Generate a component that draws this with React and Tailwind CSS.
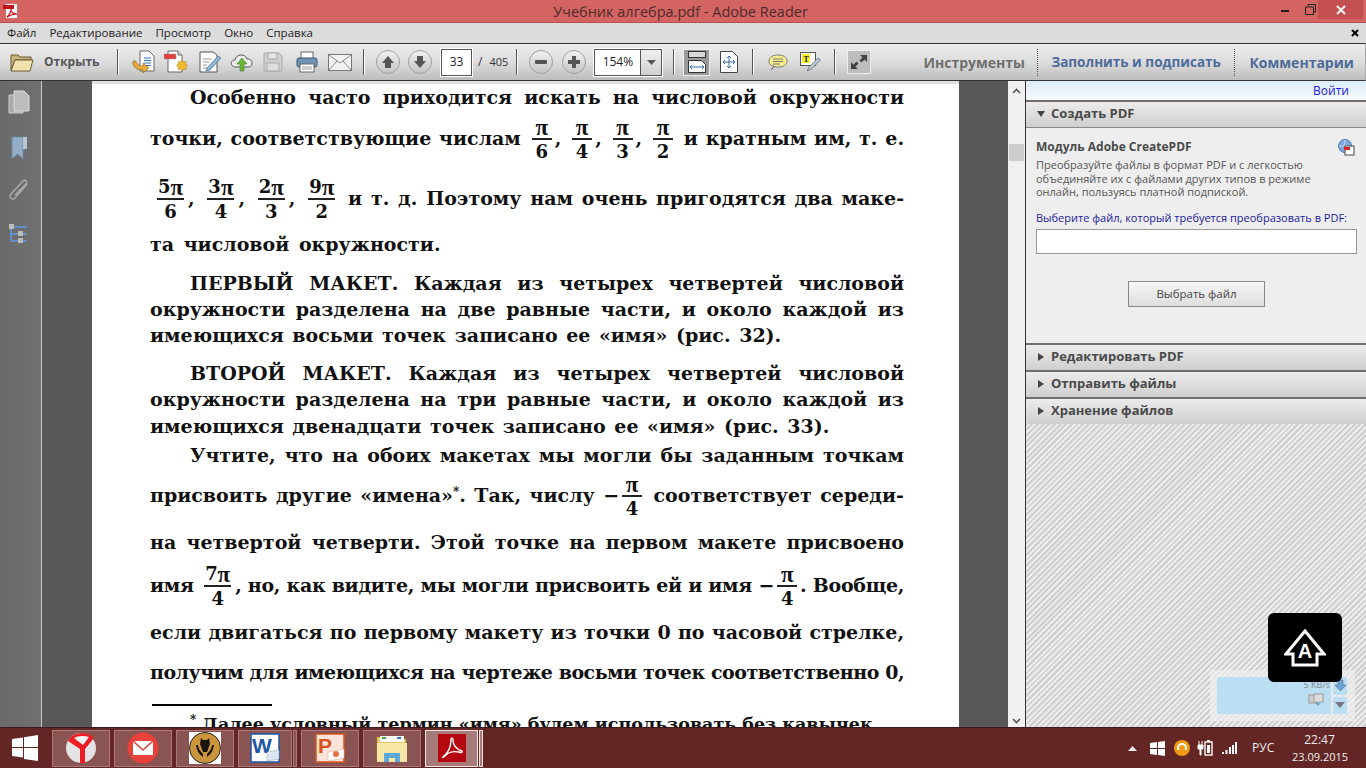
import React from "react";

const ui = { fontFamily: '"Open Sans", "Noto Sans", sans-serif' };
const serif = { fontFamily: '"DejaVu Serif", "Liberation Serif", serif' };
const piFont = { fontFamily: '"Liberation Serif", serif' };

function Pi() {
  return <span className="text-[23px] leading-none" style={piFont}>π</span>;
}

function Frac({ n, bottom, wide }) {
  return (
    <span className={`inline-flex flex-col items-center align-middle leading-none text-[18px] ${wide ? "mx-[4px]" : "mx-[3px]"}`}>
      <span className="h-[22px] flex items-center">{n}<Pi /></span>
      <span className={`h-[2px] bg-[#222] ${wide ? "w-[27px]" : "w-[20px]"}`}></span>
      <span className="h-[24px] flex items-center">{bottom}</span>
    </span>
  );
}

function Line({ className, children }) {
  return (
    <div className={`text-justify [text-align-last:justify] whitespace-nowrap flex-none ${className}`}>
      {children}
    </div>
  );
}

function Sep() {
  return <div className="w-[2px] h-[26px] flex-none bg-[#555] border-r border-white"></div>;
}

function RoundBtn({ children }) {
  return (
    <div className="w-[24px] h-[24px] rounded-full flex-none border border-[#a0a0a0] bg-gradient-to-b from-[#f2f2f2] to-[#c4c4c4] flex items-center justify-center">
      <svg width="16" height="16" viewBox="0 0 16 16">{children}</svg>
    </div>
  );
}

function PanelHeader({ label, open }) {
  return (
    <div className="h-[27px] flex-none flex items-center border-t-2 border-[#6e6e6e] bg-gradient-to-b from-[#ececec] to-[#cfcfcf] pl-[10px] pb-[2px] gap-[5px] text-[13px] font-bold text-[#4a4a4a]">
      {open ? (
        <svg width="10" height="8" viewBox="0 0 10 8"><path d="M1 1h8L5 7z" fill="#444" /></svg>
      ) : (
        <svg width="10" height="10" viewBox="0 0 10 10"><path d="M2 1l6 4-6 4z" fill="#444" /></svg>
      )}
      <span>{label}</span>
    </div>
  );
}

function TaskBtn({ active, children, className = "" }) {
  return (
    <div className={`h-[37px] flex-none flex items-center justify-center border ${active ? "bg-[#a87a79] border-[#f0e4e4]" : "bg-[#8a5452] border-[#a87a78]"} ${className}`}>
      {children}
    </div>
  );
}

export default function App() {
  return (
    <div className="w-[1366px] h-[768px] overflow-hidden flex flex-col relative bg-[#555]" style={ui}>
      {/* title bar */}
      <div className="h-[23px] flex-none bg-[#d46462] border-b border-[#b9504f] flex items-start relative">
        <svg className="ml-[2px] mt-[3px]" width="17" height="16" viewBox="0 0 17 16">
          <path d="M4 1h11v14H4z" fill="#fff" stroke="#bbb" strokeWidth=".5" />
          <rect x="1" y="2" width="11" height="4" fill="#c1121c" />
          <path d="M5 14c3-3 4-6 4-8 0 3 2 5 6 5-4 0-7 1-10 3z" fill="none" stroke="#d0121b" strokeWidth="1.2" />
        </svg>
        <div className="flex-1 text-center text-[14.500px] leading-[23px] text-[#4c2a2a] pl-[72px]">Учебник алгебра.pdf - Adobe Reader</div>
        <div className="flex items-start flex-none">
          <div className="w-[30px] h-[19px] flex items-center justify-center">
            <div className="w-[8px] h-[2px] mt-[3px] bg-[#222]"></div>
          </div>
          <div className="w-[20px] h-[19px] flex items-center justify-center">
            <svg width="11" height="11" viewBox="0 0 11 11"><path d="M3 2V.5h7.5V8H8.5M.5 3h8v7.5h-8z" fill="none" stroke="#222" /></svg>
          </div>
          <div className="w-[45px] h-[19px] ml-[-2px] mr-[3px] bg-[#c44f50] flex items-center justify-center">
            <svg width="10" height="10" viewBox="0 0 10 10"><path d="M1 1l8 8M9 1l-8 8" stroke="#fff" strokeWidth="1.8" /></svg>
          </div>
        </div>
      </div>

      {/* menu */}
      <div className="h-[20px] flex-none bg-[#dcdcdc] flex items-center pl-[7px] gap-[13px] text-[11.500px] text-[#222] relative">
        <span>Файл</span>
        <span>Редактирование</span>
        <span>Просмотр</span>
        <span>Окно</span>
        <span>Справка</span>
        <svg className="ml-auto mr-[7px]" width="8" height="8" viewBox="0 0 8 8"><path d="M1 1l6 6M7 1L1 7" stroke="#000" strokeWidth="2" /></svg>
      </div>

      {/* toolbar */}
      <div className="h-[38px] flex-none border-y border-[#333] border-r border-r-[#aaa] bg-gradient-to-b from-[#ececec] via-[#dddddd] to-[#bdbdbd] flex items-center pl-[10px]">
        <svg className="flex-none" width="24" height="20" viewBox="0 0 24 20">
          <path d="M1 18V3h7l2 2h11v3H5z" fill="#c9b27a" stroke="#6b5c33" />
          <path d="M1 19l4-11h18l-3 11z" fill="#f2e2ae" stroke="#6b5c33" />
        </svg>
        <span className="ml-[10px] w-[55px] text-[12px] font-bold text-[#555] flex-none">Открыть</span>
        <div className="ml-[18px]"><Sep /></div>
        <svg className="ml-[13px] flex-none" width="24" height="24" viewBox="0 0 24 24">
          <path d="M8 1h9l5 5v15H8z" fill="#fff" stroke="#666" />
          <path d="M12 8h7M12 10.500h7M12 13h7M12 15.500h7" stroke="#2f6fc0" />
          <path d="M1 11c-1 6 4 9 10 9v3l6-5-6-5v3c-4 0-7-2-7-5z" fill="#e9a93a" stroke="#8a5f10" strokeWidth=".6" />
        </svg>
        <svg className="ml-[8px] flex-none" width="24" height="24" viewBox="0 0 24 24">
          <path d="M4 1h10l4 4v17H4z" fill="#fff" stroke="#666" />
          <path d="M14 1v4h4" fill="#ddd" stroke="#666" />
          <rect x="0" y="4" width="12" height="5" fill="#e23c3c" stroke="#999" strokeWidth=".5" />
          <path d="M18 13l1.500 2 2.500-.5-.5 2.500 2 1.500-2 1.500.5 2.500-2.500-.5-1.500 2-1.500-2-2.500.5.5-2.500-2-1.500 2-1.500-.5-2.500 2.500.5z" fill="#f0b92e" stroke="#a87a10" strokeWidth=".5" transform="translate(0 -3)" />
        </svg>
        <svg className="ml-[11px] flex-none" width="22" height="22" viewBox="0 0 22 22">
          <path d="M1 1h13l4 3v17H1z" fill="#fff" stroke="#555" />
          <path d="M4 8h9M4 11h6M4 14h4M4 17h5" stroke="#999" />
          <path d="M8 17L19 5l3 2-11 12-4 1z" fill="#8fb6d8" stroke="#4d6f8c" strokeWidth=".7" />
        </svg>
        <svg className="ml-[9px] flex-none" width="24" height="20" viewBox="0 0 24 20">
          <path d="M6 15c-6 0-6-7-1-7 1-6 10-7 12-1 6-1 7 8 1 8z" fill="#eee" stroke="#555" />
          <path d="M12 6l5 6h-3v7h-4v-7H7z" fill="#69b53c" stroke="#3f7f1e" strokeWidth=".6" />
        </svg>
        <svg className="ml-[9px] flex-none" width="20" height="20" viewBox="0 0 20 20">
          <path d="M1 1h15l3 3v15H1z" fill="#cfcfcf" stroke="#aaa" />
          <rect x="5" y="1" width="9" height="6" fill="#e5e5e5" stroke="#aaa" />
          <rect x="4" y="11" width="12" height="8" fill="#ddd" stroke="#aaa" />
        </svg>
        <svg className="ml-[13px] flex-none" width="22" height="22" viewBox="0 0 22 22">
          <rect x="5" y="1" width="12" height="7" fill="#fff" stroke="#666" />
          <rect x="1" y="7" width="20" height="9" rx="2" fill="#6f93b5" stroke="#3f5870" />
          <rect x="4" y="13" width="14" height="8" fill="#fff" stroke="#666" />
          <path d="M6 16h10M6 18h10" stroke="#999" />
        </svg>
        <svg className="ml-[10px] flex-none" width="24" height="17" viewBox="0 0 24 17">
          <rect x=".5" y=".5" width="23" height="16" fill="#f2f2f2" stroke="#777" />
          <path d="M1 1l11 8 11-8M1 16l8-9M23 16l-8-9" fill="none" stroke="#888" />
        </svg>
        <div className="ml-[11px]"><Sep /></div>
        <div className="ml-[11px]">
          <RoundBtn><path d="M8 2l6 7h-3v5H5V9H2z" fill="#555" /></RoundBtn>
        </div>
        <div className="ml-[8px]">
          <RoundBtn><path d="M8 14l6-7h-3V2H5v5H2z" fill="#555" /></RoundBtn>
        </div>
        <div className="ml-[9px] w-[31px] h-[27px] flex-none bg-white border border-[#555] outline outline-1 outline-white flex items-center justify-center text-[12px] text-[#222]">33</div>
        <span className="ml-[6px] text-[12px] text-[#333] flex-none">/</span>
        <span className="ml-[7px] w-[21px] text-[11px] text-[#333] flex-none">405</span>
        <div className="ml-[6px]"><Sep /></div>
        <div className="ml-[11px]">
          <RoundBtn><rect x="2" y="6" width="12" height="4" rx="1" fill="#555" /></RoundBtn>
        </div>
        <div className="ml-[9px]">
          <RoundBtn><path d="M6 2h4v4h4v4h-4v4H6v-4H2V6h4z" fill="#555" /></RoundBtn>
        </div>
        <div className="ml-[8px] w-[68px] h-[27px] flex-none bg-white border border-[#555] outline outline-1 outline-white flex items-center text-[12px] text-[#222]">
          <span className="w-[45px] text-center">154%</span>
          <div className="flex-1 h-full bg-gradient-to-b from-[#f0f0f0] to-[#d0d0d0] border-l border-[#555] flex items-center justify-center">
            <svg width="9" height="5" viewBox="0 0 9 5"><path d="M0 0h9L4.500 5z" fill="#555" /></svg>
          </div>
        </div>
        <div className="ml-[11px]"><Sep /></div>
        <div className="ml-[8px] w-[27px] h-[27px] flex-none bg-[#9a9a9a] border border-[#eee] flex items-center justify-center">
          <svg width="18" height="22" viewBox="0 0 18 22">
            <rect x=".5" y=".5" width="17" height="6" fill="#d8d8d8" stroke="#333" />
            <path d="M.5 9.500h13l4 4v8H.5z" fill="#fff" stroke="#333" />
            <path d="M2 16h14M2 16l2-2M2 16l2 2M16 16l-2-2M16 16l-2 2" stroke="#3a6ea8" fill="none" />
          </svg>
        </div>
        <svg className="ml-[10px] flex-none" width="18" height="22" viewBox="0 0 18 22">
          <path d="M.5.500h12l5 5v16H.5z" fill="#fff" stroke="#444" />
          <path d="M9 5v12M3 11h12M9 5l-2 2M9 5l2 2M9 17l-2-2M9 17l2-2M3 11l2-2M3 11l2 2M15 11l-2-2M15 11l-2 2" stroke="#3a6ea8" fill="none" />
        </svg>
        <div className="ml-[14px]"><Sep /></div>
        <svg className="ml-[14px] flex-none" width="20" height="18" viewBox="0 0 20 18">
          <path d="M6 13C2 13 1 10 1 8c0-4 4-6 9-6s9 2 9 6-4 6-9 6c-1 0-2 0-3-.5L3 17z" fill="#f7ee8a" stroke="#777" />
          <path d="M5 6h10M5 8.500h10M5 11h7" stroke="#777" />
        </svg>
        <svg className="ml-[12px] flex-none" width="21" height="20" viewBox="0 0 21 20">
          <rect x=".5" y=".5" width="15" height="13" fill="#fff" stroke="#555" />
          <rect x="2" y="2" width="8" height="9" fill="#f5ef2a" />
          <text x="3.500" y="9.500" fontSize="8" fontWeight="700" fontFamily="Liberation Serif, serif" fill="#222">T</text>
          <path d="M7 19l2-4 9-9 2.500 2-9 9z" fill="#b8c4d0" stroke="#556" strokeWidth=".6" />
        </svg>
        <div className="ml-[13px]"><Sep /></div>
        <div className="ml-[11px] w-[24px] h-[24px] flex-none bg-[#bdbdbd] border border-[#eee] flex items-center justify-center">
          <svg width="20" height="20" viewBox="0 0 20 20">
            <path d="M11 3h7v7l-2.500-2.500-3 3-2-2 3-3zM9 17H2v-7l2.500 2.500 3-3 2 2-3 3z" fill="#444" />
          </svg>
        </div>
        <span className="ml-[52px] text-[14px] font-bold text-[#6e6e6e] flex-none w-[100px] whitespace-nowrap">Инструменты</span>
        <div className="ml-[14px] h-[27px] flex-none border-l border-dotted border-[#555]"></div>
        <span className="ml-[13px] text-[13.500px] font-bold text-[#4d6b99] flex-none w-[170px] whitespace-nowrap">Заполнить и подписать</span>
        <div className="ml-[13px] h-[27px] flex-none border-l border-dotted border-[#555]"></div>
        <span className="ml-[14px] text-[14px] font-bold text-[#4d6b99] flex-none">Комментарии</span>
      </div>

      {/* main */}
      <div className="flex-1 min-h-0 flex">
        <div className="w-[41px] flex-none bg-gradient-to-r from-[#6a6a6a] to-[#707070] flex flex-col items-center pr-[3px] pt-[9px]">
          <svg width="22" height="24" viewBox="0 0 22 24">
            <path d="M1 5h14v18H1z" fill="#aaa" stroke="#d0d0d0" />
            <path d="M6 1h10l5 5v15H6z" fill="#bdbdbd" stroke="#ddd" />
          </svg>
          <svg className="mt-[22px]" width="18" height="24" viewBox="0 0 18 24">
            <path d="M2 1h11v22l-5.500-5L2 23z" fill="#93aec6" stroke="#6f8aa3" />
            <path d="M13 1h4v12h-4z" fill="#b8c8d6" />
          </svg>
          <svg className="mt-[18px]" width="22" height="24" viewBox="0 0 22 24">
            <path d="M19 6L7 20c-3 3-7-1-4-4L15 3c2-2 5 1 3 3L7 17" fill="none" stroke="#aaa" strokeWidth="1.500" />
          </svg>
          <svg className="mt-[21px]" width="20" height="20" viewBox="0 0 20 20">
            <path d="M2 4v14h16M2 4h16M2 11h16" fill="none" stroke="#5f8fc4" strokeWidth="2" />
            <rect x="0" y="1" width="5" height="5" fill="#bbb" />
            <rect x="9" y="8" width="5" height="5" fill="#bbb" />
            <rect x="9" y="15" width="5" height="5" fill="#bbb" />
          </svg>
        </div>
        <div className="w-[51px] flex-none bg-[#585858] border-l border-[#c8c8c8]"></div>

        {/* page */}
        <div className="w-[867px] flex-none bg-white overflow-hidden pl-[58px] pr-[55px] text-[19px] font-bold leading-[26px] text-[#111] flex flex-col border-t-[3px] border-[#e0e0e0]" style={serif}>
          <Line className="h-[26px] pl-[40px]">Особенно часто приходится искать на числовой окружности</Line>
          <Line className="h-[46px] mt-[5px] leading-[46px]">
            точки, соответствующие числам <Frac n="" bottom="6" />, <Frac n="" bottom="4" />, <Frac n="" bottom="3" />, <Frac n="" bottom="2" /> и кратным им, т. е.
          </Line>
          <Line className="h-[54px] mt-[10px] leading-[54px] pl-[3px]">
            <Frac n="5" bottom="6" wide />, <Frac n="3" bottom="4" wide />, <Frac n="2" bottom="3" wide />, <Frac n="9" bottom="2" wide /> и т. д. Поэтому нам очень пригодятся два маке-
          </Line>
          <div className="h-[26px] mt-[6px] flex-none [word-spacing:3px]">та числовой окружности.</div>
          <Line className="h-[26px] mt-[13px] pl-[40px]">ПЕРВЫЙ МАКЕТ. Каждая из четырех четвертей числовой</Line>
          <Line className="h-[26px]">окружности разделена на две равные части, и около каждой из</Line>
          <div className="h-[26px] flex-none [word-spacing:2px]">имеющихся восьми точек записано ее «имя» (рис. 32).</div>
          <Line className="h-[26px] mt-[12px] pl-[40px]">ВТОРОЙ МАКЕТ. Каждая из четырех четвертей числовой</Line>
          <Line className="h-[26px]">окружности разделена на три равные части, и около каждой из</Line>
          <div className="h-[26px] mt-[1px] flex-none [word-spacing:2px]">имеющихся двенадцати точек записано ее «имя» (рис. 33).</div>
          <Line className="h-[26px] mt-[3px] pl-[40px]">Учтите, что на обоих макетах мы могли бы заданным точкам</Line>
          <Line className="h-[50px] mt-[2px] leading-[50px]">
            присвоить другие «имена»<sup className="text-[12px]">*</sup>. Так, числу −<Frac n="" bottom="4" /> соответствует середи-
          </Line>
          <Line className="h-[26px] mt-[9px]">на четвертой четверти. Этой точке на первом макете присвоено</Line>
          <Line className="h-[50px] mt-[5px] leading-[50px] tracking-[-0.3px]">
            имя <Frac n="7" bottom="4" wide />, но, как видите, мы могли присвоить ей и имя −<Frac n="" bottom="4" />. Вообще,
          </Line>
          <Line className="h-[26px] mt-[9px]">если двигаться по первому макету из точки 0 по часовой стрелке,</Line>
          <Line className="h-[26px] mt-[14px] tracking-[-0.5px]">получим для имеющихся на чертеже восьми точек соответственно 0,</Line>
          <div className="w-[120px] h-[2px] mt-[19px] ml-[2px] flex-none bg-black"></div>
          <div className="mt-[5px] pl-[40px] text-[17.500px] flex-none whitespace-nowrap"><sup className="text-[12px]">*</sup> Далее условный термин «имя» будем использовать без кавычек.</div>
        </div>

        <div className="w-[49px] flex-none bg-[#585858]"></div>

        {/* scrollbar */}
        <div className="w-[17px] flex-none bg-[#f0f0f0] flex flex-col items-center pt-[7px]">
          <svg width="9" height="6" viewBox="0 0 9 6"><path d="M1 5l3.500-3.500L8 5" fill="none" stroke="#555" strokeWidth="1.600" /></svg>
          <div className="w-[15px] h-[17px] mt-[50px] bg-[#cdcdcd]"></div>
          <svg className="mt-auto mb-[3px]" width="9" height="6" viewBox="0 0 9 6"><path d="M1 1l3.500 3.500L8 1" fill="none" stroke="#555" strokeWidth="1.600" /></svg>
        </div>

        {/* right panel */}
        <div className="flex-1 min-w-0 flex flex-col border-l border-[#333] bg-[repeating-linear-gradient(135deg,#ececec_0px,#ececec_2px,#cfcfcf_2px,#cfcfcf_4px)]">
          <div className="h-[19px] flex-none bg-gradient-to-b from-[#dcecfb] to-[#f6fafe] text-right pr-[17px] text-[12px] leading-[19px] text-[#1a1ae0]">Войти</div>
          <PanelHeader label="Создать PDF" open />
          <div className="h-[216px] flex-none bg-[#eeeeee] pl-[10px] pr-[9px] border-t border-[#888] relative">
            <div className="pt-[10px] text-[12px] font-bold leading-[17px] text-[#4a4a4a]">Модуль Adobe CreatePDF</div>
            <div className="pt-[3px] text-[11px] leading-[13.500px] text-[#555] whitespace-nowrap">
              <div>Преобразуйте файлы в формат PDF и с легкостью</div>
              <div>объединяйте их с файлами других типов в режиме</div>
              <div>онлайн, пользуясь платной подпиской.</div>
            </div>
            <div className="pt-[11px] text-[11px] leading-[15px] text-[#1a1a9e] whitespace-nowrap">Выберите файл, который требуется преобразовать в PDF:</div>
            <div className="mt-[4px] h-[25px] bg-white border border-[#999]"></div>
            <div className="mt-[27px] mx-auto w-[137px] h-[26px] border border-[#888] bg-gradient-to-b from-[#f6f6f6] to-[#dedede] flex items-center justify-center text-[11.500px] text-[#444]">Выбрать файл</div>
            <svg className="absolute right-[11px] top-[11px]" width="17" height="17" viewBox="0 0 17 17">
              <circle cx="7" cy="7" r="6.500" fill="#7aa8dc" stroke="#4a78b0" />
              <path d="M1 7h12M7 1v12" stroke="#cfe0f2" />
              <rect x="7" y="7" width="9" height="9" fill="#fff" stroke="#444" />
              <rect x="6" y="8" width="6" height="3" fill="#d22" />
            </svg>
          </div>
          <PanelHeader label="Редактировать PDF" />
          <PanelHeader label="Отправить файлы" />
          <PanelHeader label="Хранение файлов" />
        </div>
      </div>

      {/* taskbar */}
      <div className="h-[41px] flex-none bg-[#632625] border-t border-[#3f1a1a] flex items-center pl-[12px]">
        <svg className="flex-none" width="26" height="26" viewBox="0 0 26 26">
          <path d="M0 4l11-1.500V12H0zM12 2.300L26 0v12H12zM0 13h11v9.500L0 21zM12 13h14v13l-14-2z" fill="#fff" />
        </svg>
        <div className="ml-[14px]">
          <TaskBtn className="w-[58px]">
            <svg width="32" height="32" viewBox="0 0 32 32">
              <circle cx="16" cy="16" r="15" fill="#e4e4e4" />
              <path d="M3 9c4-9 18-11 26-3l-9 11v14h-5V17z" fill="#ee1c25" />
              <path d="M9 6c3-2 9-3 15-1l-6 8z" fill="#f4f4f4" />
            </svg>
          </TaskBtn>
        </div>
        <div className="ml-[4px]">
          <TaskBtn className="w-[58px]">
            <svg width="32" height="32" viewBox="0 0 32 32">
              <circle cx="16" cy="16" r="15.500" fill="#e8403a" />
              <rect x="6" y="9" width="20" height="14" fill="#fff" />
              <path d="M6 9l10 9 10-9" fill="none" stroke="#e8403a" strokeWidth="1.600" />
            </svg>
          </TaskBtn>
        </div>
        <div className="ml-[4px]">
          <TaskBtn className="w-[58px]">
            <svg width="32" height="32" viewBox="0 0 32 32">
              <rect width="32" height="32" fill="#fff" />
              <circle cx="16" cy="16" r="15.500" fill="#c9963c" stroke="#222" />
              <path d="M12 6l2 2h4l2-2 1 6-3 8h-4l-3-8zM7 13c1 6 3 9 7 12v-3c-3-3-5-6-5-9zM25 13c-1 6-3 9-7 12v-3c3-3 5-6 5-9z" fill="#1a1410" />
            </svg>
          </TaskBtn>
        </div>
        <div className="ml-[4px] flex gap-[1px]">
          <TaskBtn className="w-[54px]">
            <svg width="30" height="30" viewBox="0 0 30 30">
              <rect x="1" y="1" width="28" height="28" fill="#fff" stroke="#1c56a8" strokeWidth="1.500" />
              <text x="2" y="20" fontSize="21" fontWeight="700" fontFamily="Liberation Sans, sans-serif" fill="#1c56a8">W</text>
              <path d="M17 19l12-2v9l-12 2z" fill="#dde6f2" stroke="#8aa" strokeWidth=".5" />
            </svg>
          </TaskBtn>
          <TaskBtn className="w-[4px]"></TaskBtn>
        </div>
        <div className="ml-[4px]">
          <TaskBtn className="w-[58px]">
            <svg width="30" height="30" viewBox="0 0 30 30">
              <rect x="1" y="1" width="28" height="28" fill="#fbe3d8" stroke="#d8541e" strokeWidth="1.500" />
              <text x="3" y="20" fontSize="21" fontWeight="700" fontFamily="Liberation Sans, sans-serif" fill="#d8541e">P</text>
              <path d="M13 19l16-3v9l-16 3z" fill="#fff" stroke="#e8a080" strokeWidth=".5" />
              <circle cx="21" cy="21" r="3" fill="#e87040" />
            </svg>
          </TaskBtn>
        </div>
        <div className="ml-[4px]">
          <TaskBtn className="w-[58px]">
            <svg width="32" height="32" viewBox="0 0 32 32">
              <path d="M1 5h11l2 2h16v20H1z" fill="#e6c96a" stroke="#a88a30" strokeWidth=".5" />
              <rect x="4" y="4" width="24" height="6" fill="#fff" />
              <rect x="6" y="5" width="4" height="2" fill="#3cab50" />
              <rect x="21" y="5" width="4" height="2" fill="#3078d0" />
              <path d="M1 11h30v19H1z" fill="#f7e6a6" />
              <path d="M8 30V21h16v9h-5v-4h-6v4z" fill="#5aa8d8" />
            </svg>
          </TaskBtn>
        </div>
        <div className="ml-[4px] flex gap-[1px]">
          <TaskBtn active className="w-[53px]">
            <svg width="28" height="28" viewBox="0 0 28 28">
              <rect width="28" height="28" fill="#b3080f" />
              <path d="M5 23c5-4 8-11 8-17 0-3 2-2 2 0 0 6 3 9 9 11 1 1-1 2-3 1-6-1-10 0-13 3-2 2-4 3-3 2z" fill="none" stroke="#fff" strokeWidth="1.400" />
            </svg>
          </TaskBtn>
          <TaskBtn active className="w-[4px]"></TaskBtn>
        </div>
        <div className="ml-auto flex items-center text-white flex-none">
          <svg width="9" height="5" viewBox="0 0 9 5"><path d="M0 5l4.500-5L9 5z" fill="#eee" /></svg>
          <svg className="ml-[13px]" width="15" height="15" viewBox="0 0 15 15"><path d="M0 2l7-1v6H0zM8 1l7-1v7H8zM0 8h7v6l-7-1zM8 8h7v7l-7-1z" fill="#fff" /></svg>
          <svg className="ml-[9px]" width="16" height="16" viewBox="0 0 16 16">
            <circle cx="8" cy="8" r="8" fill="#f09a12" />
            <circle cx="8" cy="8" r="4" fill="none" stroke="#fff" strokeWidth="2" />
            <rect x="3" y="10" width="10" height="3" fill="#f09a12" />
          </svg>
          <svg className="ml-[7px]" width="16" height="16" viewBox="0 0 16 16">
            <path d="M1 5h5v4H4v6H3V9H1zM2 1v4M5 1v4" fill="#fff" stroke="#fff" />
            <rect x="8" y="2" width="7" height="13" fill="none" stroke="#fff" strokeWidth="1.400" />
            <rect x="10" y="0" width="3" height="2" fill="#fff" />
            <rect x="10" y="5" width="3" height="8" fill="#fff" />
          </svg>
          <svg className="ml-[8px]" width="16" height="12" viewBox="0 0 16 12">
            <path d="M1 10h2v2H1zM4.500 8h2v4h-2zM8 5h2v7H8zM11 3h2v9h-2zM14 0h2v12h-2z" fill="#fff" />
          </svg>
          <span className="ml-[15px] w-[27px] text-[12px] text-[#eee]">РУС</span>
          <div className="ml-[13px] mr-[19px] w-[55px] text-center text-[12px] leading-[17px] text-[#eee]">
            <div>22:47</div>
            <div className="text-[11px]">23.09.2015</div>
          </div>
        </div>
      </div>

      {/* floating overlays */}
      <div className="absolute left-[1210px] top-[670px] w-[145px] h-[51px] bg-[#f0f0f0]/70 flex gap-[2px] pl-[7px] pr-[8px] py-[7px]">
        <div className="flex-1 bg-[#a8d8f5]/70 flex flex-col items-end pr-[1px] text-[9px] text-[#8a8a8a] leading-[16px]">
          <span>5 KB/s</span>
          <svg className="mr-[6px]" width="16" height="14" viewBox="0 0 16 14">
            <rect x="1" y="2" width="8" height="8" fill="#ccc" stroke="#999" />
            <rect x="6" y="1" width="9" height="8" fill="#ddd" stroke="#999" />
            <path d="M7 10h6l-3 3z" fill="#6aa8d8" />
          </svg>
        </div>
        <div className="w-[14px] flex flex-col gap-[2px]">
          <div className="flex-1 bg-[#a8d8f5]/70 flex items-center justify-center">
            <svg width="11" height="13" viewBox="0 0 11 13"><path d="M3 1h5v5h3l-5.500 6L0 6h3z" fill="#6aa8d8" stroke="#557" strokeWidth=".5" /></svg>
          </div>
          <div className="flex-1 bg-[#a8d8f5]/70 flex items-center justify-center">
            <svg width="10" height="6" viewBox="0 0 10 6"><path d="M0 0h10L5 6z" fill="#778" /></svg>
          </div>
        </div>
      </div>
      <div className="absolute left-[1268px] top-[613px] w-[74px] h-[69px] rounded-[6px] bg-black flex items-center justify-center">
        <div className="relative w-[42px] h-[38px] flex items-center justify-center">
          <svg className="absolute inset-0" width="42" height="38" viewBox="0 0 42 38">
            <path d="M21 2L40 25H33V36H9V25H2z" fill="none" stroke="#fff" strokeWidth="3" />
          </svg>
          <span className="relative mt-[6px] text-[20px] font-bold text-white leading-none" style={{ fontFamily: '"Liberation Sans", sans-serif' }}>A</span>
        </div>
      </div>
    </div>
  );
}
